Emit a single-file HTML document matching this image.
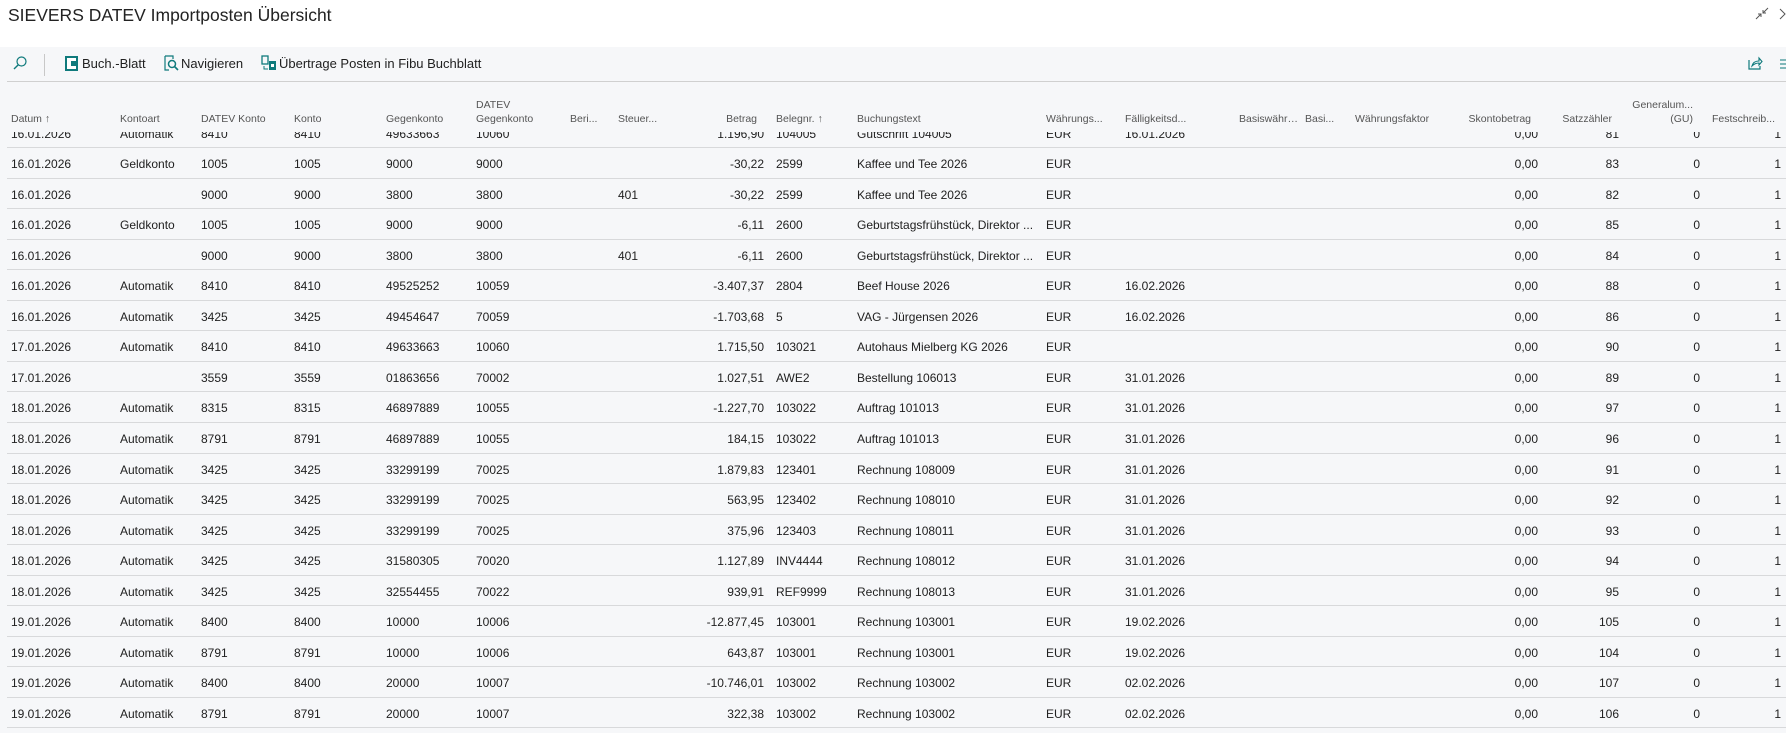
<!DOCTYPE html>
<html><head><meta charset="utf-8">
<style>
*{box-sizing:border-box;margin:0;padding:0}
body{width:1786px;height:733px;overflow:hidden;background:#fff;font-family:"Liberation Sans",sans-serif;color:#212121;position:relative}
.title{position:absolute;left:8px;top:5px;font-size:17.5px;color:#222}
.gray{position:absolute;left:0;top:47px;width:1786px;height:686px;background:#f6f7f9}
.tb{position:absolute;top:56px;font-size:13px;color:#212121;white-space:nowrap}
.tbline{position:absolute;left:7px;top:81px;width:1779px;height:1px;background:#d0d0d0}
.hdr{position:absolute;font-size:10.5px;color:#555;white-space:nowrap;line-height:14px}
.body{position:absolute;left:0;top:132px;width:1786px;height:601px;overflow:hidden}
.rows{position:absolute;left:0;top:-14.5px;width:1786px}
.r{position:relative;height:30.55px;border-bottom:1px solid #d8d9db;margin-left:7px;font-size:12px;white-space:nowrap}
.r span{position:absolute;top:9px}
.a{left:4px}.b{left:113px}.c{left:194px}.d{left:287px}.e{left:379px}.f{left:469px}.g{left:611px}
.h{right:1022px}.i{left:769px}.j{left:850px}.k{left:1039px}.l{left:1118px}
.m{right:248px}.n{right:167px}.o{right:86px}.p{right:5px}
</style></head><body>
<div class="title">SIEVERS DATEV Importposten Übersicht</div>
<svg style="position:absolute;left:1754px;top:6px" width="32" height="16" viewBox="0 0 32 16"><path d="M2 13 L7 8 M4 8 H7 V11 M14 2 L9 7 M9 4 V7 H12" stroke="#555" fill="none" stroke-width="1"/><path d="M26 3 L31 8 L26 13" stroke="#555" fill="none" stroke-width="1"/></svg>
<div class="gray"></div>
<svg style="position:absolute;left:12px;top:55px" width="16" height="16" viewBox="0 0 16 16"><circle cx="9.5" cy="6.5" r="4.5" stroke="#0f7a7c" fill="none" stroke-width="1.2"/><path d="M6.3 9.7 L2 14" stroke="#0f7a7c" stroke-width="1.4"/></svg>
<div style="position:absolute;left:44px;top:54px;width:1px;height:22px;background:#c8c8c8"></div>
<svg style="position:absolute;left:65px;top:56px" width="14" height="15" viewBox="0 0 14 15"><rect x="1" y="1" width="11" height="13" fill="#fff" stroke="#0f7a7c" stroke-width="2"/><rect x="6" y="5" width="5" height="5" fill="#0f7a7c"/></svg>
<div class="tb" style="left:82px">Buch.-Blatt</div>
<svg style="position:absolute;left:163px;top:55px" width="16" height="16" viewBox="0 0 16 16"><path d="M2 1 H10 V4 M2 1 V15 H6" stroke="#0f7a7c" fill="none" stroke-width="1.2"/><circle cx="9" cy="9" r="3.5" stroke="#0f7a7c" fill="none" stroke-width="1.5"/><path d="M11.5 11.5 L15 15" stroke="#0f7a7c" stroke-width="1.6"/></svg>
<div class="tb" style="left:181px">Navigieren</div>
<svg style="position:absolute;left:261px;top:55px" width="16" height="16" viewBox="0 0 16 16"><rect x="1" y="1" width="6" height="8" fill="none" stroke="#0f7a7c" stroke-width="1.3"/><rect x="8" y="6" width="7" height="9" fill="#0f7a7c"/><rect x="10" y="9" width="3" height="3" fill="#fff"/><path d="M3 11 V14 H7" stroke="#0f7a7c" fill="none"/></svg>
<div class="tb" style="left:279px">Übertrage Posten in Fibu Buchblatt</div>
<svg style="position:absolute;left:1747px;top:55px" width="16" height="16" viewBox="0 0 16 16"><path d="M2 5 V14 H13 V11" stroke="#0f7a7c" fill="none" stroke-width="1.2"/><path d="M5 11 C6 7 9 6 12 6 V3 L15 6.5 L12 10 V8 C9 8 7 9 5 11Z" stroke="#0f7a7c" fill="none" stroke-width="1.1"/></svg>
<svg style="position:absolute;left:1780px;top:58px" width="6" height="12"><path d="M0 2H6M0 6H6M0 10H6" stroke="#0f7a7c"/></svg>
<div class="tbline"></div>

<div class="hdr" style="left:11px;top:112px">Datum ↑</div>
<div class="hdr" style="left:120px;top:112px">Kontoart</div>
<div class="hdr" style="left:201px;top:112px">DATEV Konto</div>
<div class="hdr" style="left:294px;top:112px">Konto</div>
<div class="hdr" style="left:386px;top:112px">Gegenkonto</div>
<div class="hdr" style="left:476px;top:98px">DATEV<br>Gegenkonto</div>
<div class="hdr" style="left:570px;top:112px">Beri...</div>
<div class="hdr" style="left:618px;top:112px">Steuer...</div>
<div class="hdr" style="right:1029px;top:112px">Betrag</div>
<div class="hdr" style="left:776px;top:112px">Belegnr. ↑</div>
<div class="hdr" style="left:857px;top:112px">Buchungstext</div>
<div class="hdr" style="left:1046px;top:112px">Währungs...</div>
<div class="hdr" style="left:1125px;top:112px">Fälligkeitsd...</div>
<div class="hdr" style="left:1239px;top:112px;width:62px;overflow:hidden;text-overflow:ellipsis">Basiswährung...</div>
<div class="hdr" style="left:1305px;top:112px">Basi...</div>
<div class="hdr" style="left:1355px;top:112px">Währungsfaktor</div>
<div class="hdr" style="right:255px;top:112px">Skontobetrag</div>
<div class="hdr" style="right:174px;top:112px">Satzzähler</div>
<div class="hdr" style="right:93px;top:98px;text-align:right">Generalum...<br>(GU)</div>
<div class="hdr" style="left:1712px;top:112px">Festschreib...</div>

<div class="body"><div class="rows">
<div class="r"><span class="a">16.01.2026</span><span class="b">Automatik</span><span class="c">8410</span><span class="d">8410</span><span class="e">49633663</span><span class="f">10060</span><span class="h">1.196,90</span><span class="i">104005</span><span class="j">Gutschrift 104005</span><span class="k">EUR</span><span class="l">16.01.2026</span><span class="m">0,00</span><span class="n">81</span><span class="o">0</span><span class="p">1</span></div>
<div class="r"><span class="a">16.01.2026</span><span class="b">Geldkonto</span><span class="c">1005</span><span class="d">1005</span><span class="e">9000</span><span class="f">9000</span><span class="h">-30,22</span><span class="i">2599</span><span class="j">Kaffee und Tee 2026</span><span class="k">EUR</span><span class="m">0,00</span><span class="n">83</span><span class="o">0</span><span class="p">1</span></div>
<div class="r"><span class="a">16.01.2026</span><span class="c">9000</span><span class="d">9000</span><span class="e">3800</span><span class="f">3800</span><span class="g">401</span><span class="h">-30,22</span><span class="i">2599</span><span class="j">Kaffee und Tee 2026</span><span class="k">EUR</span><span class="m">0,00</span><span class="n">82</span><span class="o">0</span><span class="p">1</span></div>
<div class="r"><span class="a">16.01.2026</span><span class="b">Geldkonto</span><span class="c">1005</span><span class="d">1005</span><span class="e">9000</span><span class="f">9000</span><span class="h">-6,11</span><span class="i">2600</span><span class="j">Geburtstagsfrühstück, Direktor ...</span><span class="k">EUR</span><span class="m">0,00</span><span class="n">85</span><span class="o">0</span><span class="p">1</span></div>
<div class="r"><span class="a">16.01.2026</span><span class="c">9000</span><span class="d">9000</span><span class="e">3800</span><span class="f">3800</span><span class="g">401</span><span class="h">-6,11</span><span class="i">2600</span><span class="j">Geburtstagsfrühstück, Direktor ...</span><span class="k">EUR</span><span class="m">0,00</span><span class="n">84</span><span class="o">0</span><span class="p">1</span></div>
<div class="r"><span class="a">16.01.2026</span><span class="b">Automatik</span><span class="c">8410</span><span class="d">8410</span><span class="e">49525252</span><span class="f">10059</span><span class="h">-3.407,37</span><span class="i">2804</span><span class="j">Beef House 2026</span><span class="k">EUR</span><span class="l">16.02.2026</span><span class="m">0,00</span><span class="n">88</span><span class="o">0</span><span class="p">1</span></div>
<div class="r"><span class="a">16.01.2026</span><span class="b">Automatik</span><span class="c">3425</span><span class="d">3425</span><span class="e">49454647</span><span class="f">70059</span><span class="h">-1.703,68</span><span class="i">5</span><span class="j">VAG - Jürgensen 2026</span><span class="k">EUR</span><span class="l">16.02.2026</span><span class="m">0,00</span><span class="n">86</span><span class="o">0</span><span class="p">1</span></div>
<div class="r"><span class="a">17.01.2026</span><span class="b">Automatik</span><span class="c">8410</span><span class="d">8410</span><span class="e">49633663</span><span class="f">10060</span><span class="h">1.715,50</span><span class="i">103021</span><span class="j">Autohaus Mielberg KG 2026</span><span class="k">EUR</span><span class="m">0,00</span><span class="n">90</span><span class="o">0</span><span class="p">1</span></div>
<div class="r"><span class="a">17.01.2026</span><span class="c">3559</span><span class="d">3559</span><span class="e">01863656</span><span class="f">70002</span><span class="h">1.027,51</span><span class="i">AWE2</span><span class="j">Bestellung 106013</span><span class="k">EUR</span><span class="l">31.01.2026</span><span class="m">0,00</span><span class="n">89</span><span class="o">0</span><span class="p">1</span></div>
<div class="r"><span class="a">18.01.2026</span><span class="b">Automatik</span><span class="c">8315</span><span class="d">8315</span><span class="e">46897889</span><span class="f">10055</span><span class="h">-1.227,70</span><span class="i">103022</span><span class="j">Auftrag 101013</span><span class="k">EUR</span><span class="l">31.01.2026</span><span class="m">0,00</span><span class="n">97</span><span class="o">0</span><span class="p">1</span></div>
<div class="r"><span class="a">18.01.2026</span><span class="b">Automatik</span><span class="c">8791</span><span class="d">8791</span><span class="e">46897889</span><span class="f">10055</span><span class="h">184,15</span><span class="i">103022</span><span class="j">Auftrag 101013</span><span class="k">EUR</span><span class="l">31.01.2026</span><span class="m">0,00</span><span class="n">96</span><span class="o">0</span><span class="p">1</span></div>
<div class="r"><span class="a">18.01.2026</span><span class="b">Automatik</span><span class="c">3425</span><span class="d">3425</span><span class="e">33299199</span><span class="f">70025</span><span class="h">1.879,83</span><span class="i">123401</span><span class="j">Rechnung 108009</span><span class="k">EUR</span><span class="l">31.01.2026</span><span class="m">0,00</span><span class="n">91</span><span class="o">0</span><span class="p">1</span></div>
<div class="r"><span class="a">18.01.2026</span><span class="b">Automatik</span><span class="c">3425</span><span class="d">3425</span><span class="e">33299199</span><span class="f">70025</span><span class="h">563,95</span><span class="i">123402</span><span class="j">Rechnung 108010</span><span class="k">EUR</span><span class="l">31.01.2026</span><span class="m">0,00</span><span class="n">92</span><span class="o">0</span><span class="p">1</span></div>
<div class="r"><span class="a">18.01.2026</span><span class="b">Automatik</span><span class="c">3425</span><span class="d">3425</span><span class="e">33299199</span><span class="f">70025</span><span class="h">375,96</span><span class="i">123403</span><span class="j">Rechnung 108011</span><span class="k">EUR</span><span class="l">31.01.2026</span><span class="m">0,00</span><span class="n">93</span><span class="o">0</span><span class="p">1</span></div>
<div class="r"><span class="a">18.01.2026</span><span class="b">Automatik</span><span class="c">3425</span><span class="d">3425</span><span class="e">31580305</span><span class="f">70020</span><span class="h">1.127,89</span><span class="i">INV4444</span><span class="j">Rechnung 108012</span><span class="k">EUR</span><span class="l">31.01.2026</span><span class="m">0,00</span><span class="n">94</span><span class="o">0</span><span class="p">1</span></div>
<div class="r"><span class="a">18.01.2026</span><span class="b">Automatik</span><span class="c">3425</span><span class="d">3425</span><span class="e">32554455</span><span class="f">70022</span><span class="h">939,91</span><span class="i">REF9999</span><span class="j">Rechnung 108013</span><span class="k">EUR</span><span class="l">31.01.2026</span><span class="m">0,00</span><span class="n">95</span><span class="o">0</span><span class="p">1</span></div>
<div class="r"><span class="a">19.01.2026</span><span class="b">Automatik</span><span class="c">8400</span><span class="d">8400</span><span class="e">10000</span><span class="f">10006</span><span class="h">-12.877,45</span><span class="i">103001</span><span class="j">Rechnung 103001</span><span class="k">EUR</span><span class="l">19.02.2026</span><span class="m">0,00</span><span class="n">105</span><span class="o">0</span><span class="p">1</span></div>
<div class="r"><span class="a">19.01.2026</span><span class="b">Automatik</span><span class="c">8791</span><span class="d">8791</span><span class="e">10000</span><span class="f">10006</span><span class="h">643,87</span><span class="i">103001</span><span class="j">Rechnung 103001</span><span class="k">EUR</span><span class="l">19.02.2026</span><span class="m">0,00</span><span class="n">104</span><span class="o">0</span><span class="p">1</span></div>
<div class="r"><span class="a">19.01.2026</span><span class="b">Automatik</span><span class="c">8400</span><span class="d">8400</span><span class="e">20000</span><span class="f">10007</span><span class="h">-10.746,01</span><span class="i">103002</span><span class="j">Rechnung 103002</span><span class="k">EUR</span><span class="l">02.02.2026</span><span class="m">0,00</span><span class="n">107</span><span class="o">0</span><span class="p">1</span></div>
<div class="r"><span class="a">19.01.2026</span><span class="b">Automatik</span><span class="c">8791</span><span class="d">8791</span><span class="e">20000</span><span class="f">10007</span><span class="h">322,38</span><span class="i">103002</span><span class="j">Rechnung 103002</span><span class="k">EUR</span><span class="l">02.02.2026</span><span class="m">0,00</span><span class="n">106</span><span class="o">0</span><span class="p">1</span></div>
</div></div>
</body></html>
